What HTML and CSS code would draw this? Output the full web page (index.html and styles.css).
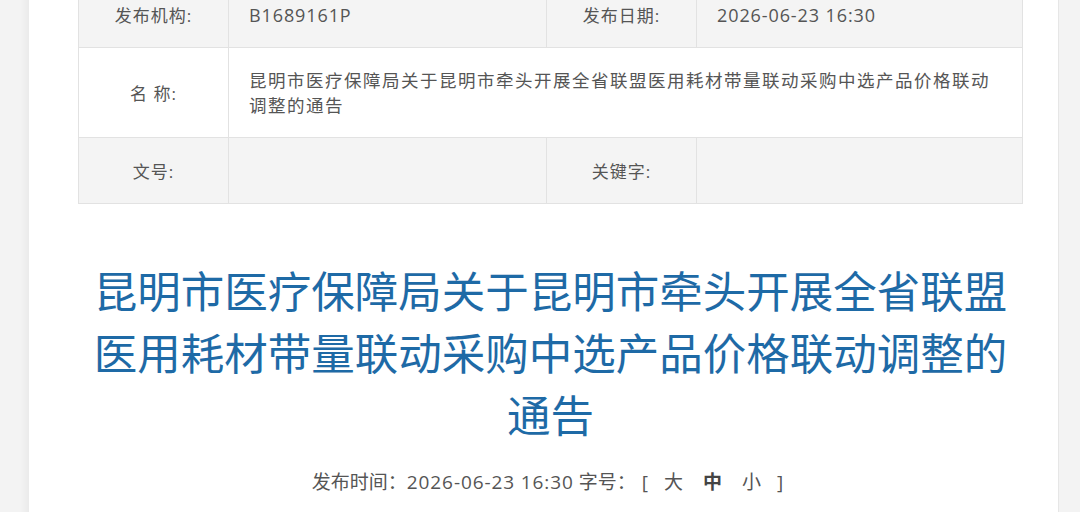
FILE: index.html
```html
<!DOCTYPE html>
<html lang="zh-CN">
<head>
  <meta charset="UTF-8" />
  <meta name="viewport" content="width=device-width, initial-scale=1" />
  <title>昆明市医疗保障局关于昆明市牵头开展全省联盟医用耗材带量联动采购中选产品价格联动调整的通告</title>
  <link rel="stylesheet" href="styles.css">
</head>
<body>
  <div class="page">
    <div class="article">
      <table class="info-table">
        <colgroup>
          <col class="col-label">
          <col class="col-value">
          <col class="col-label">
          <col>
        </colgroup>
        <tr class="row-gray">
          <th>发布机构:</th>
          <td class="latin">B1689161P</td>
          <th>发布日期:</th>
          <td class="latin">2026-06-23 16:30</td>
        </tr>
        <tr class="row-name">
          <th>名 称:</th>
          <td colspan="3" class="name-cell">昆明市医疗保障局关于昆明市牵头开展全省联盟医用耗材带量联动采购中选产品价格联动调整的通告</td>
        </tr>
        <tr class="row-gray">
          <th>文号:</th>
          <td></td>
          <th>关键字:</th>
          <td></td>
        </tr>
      </table>

      <h1 class="article-title">昆明市医疗保障局关于昆明市牵头开展全省联盟医用耗材带量联动采购中选产品价格联动调整的通告</h1>

      <div class="article-meta">
        <span>发布时间：<span class="latin">2026-06-23 16:30</span></span>
        <span class="font-size">字号：<span class="bracket">[</span><a class="fs">大</a><a class="fs active">中</a><a class="fs">小</a><span class="bracket">]</span></span>
      </div>
    </div>
  </div>
</body>
</html>
```

FILE: styles.css
```css
* {
  box-sizing: border-box;
  margin: 0;
  padding: 0;
}

body {
  font-family: "Open Sans", "Noto Sans CJK SC", sans-serif;
  background: #f3f3f3;
  color: #555;
  height: 512px;
  overflow: hidden;
}

.page {
  margin: 0 22px 0 29px;
  min-height: 100vh;
  background: #fff;
  box-shadow: -4px 0 6px rgba(0, 0, 0, 0.04), 1px 0 0 #e6e6e6;
}

.article {
  padding: 0 35px 40px 49px;
}

.latin {
  letter-spacing: 0.9px;
}

/* info table at the top of the article */
.info-table {
  width: 100%;
  margin-top: -19px;
  border-collapse: collapse;
  table-layout: fixed;
  border: 1px solid #e2e2e2;
}

.col-label {
  width: 150px;
}

.col-value {
  width: 318px;
}

.info-table th,
.info-table td {
  border: 1px solid #e2e2e2;
  font-size: 18px;
  color: #555;
  height: 66px;
}

.info-table th {
  font-weight: normal;
  font-size: 17px;
  text-align: center;
  letter-spacing: 1px;
}

.info-table td {
  padding: 0 20px;
  text-align: left;
}

.row-gray th,
.row-gray td {
  background: #f4f4f4;
}

.row-name th,
.row-name td {
  background: #fff;
  height: 90px;
}

.info-table .name-cell {
  font-size: 17.5px;
  letter-spacing: 1.5px;
  line-height: 25px;
  padding-right: 30px;
}

/* big blue headline */
.article-title {
  margin-top: 57px;
  font-size: 43.5px;
  font-weight: normal;
  line-height: 62px;
  color: #1e6aa6;
  text-align: center;
}

.article-meta {
  margin-top: 20px;
  text-align: center;
  font-size: 19px;
  color: #555;
}

.bracket {
  margin: 0 6px;
}

.fs {
  margin: 0 10px;
  cursor: pointer;
}

.fs.active {
  font-weight: bold;
  color: #444;
}
```
